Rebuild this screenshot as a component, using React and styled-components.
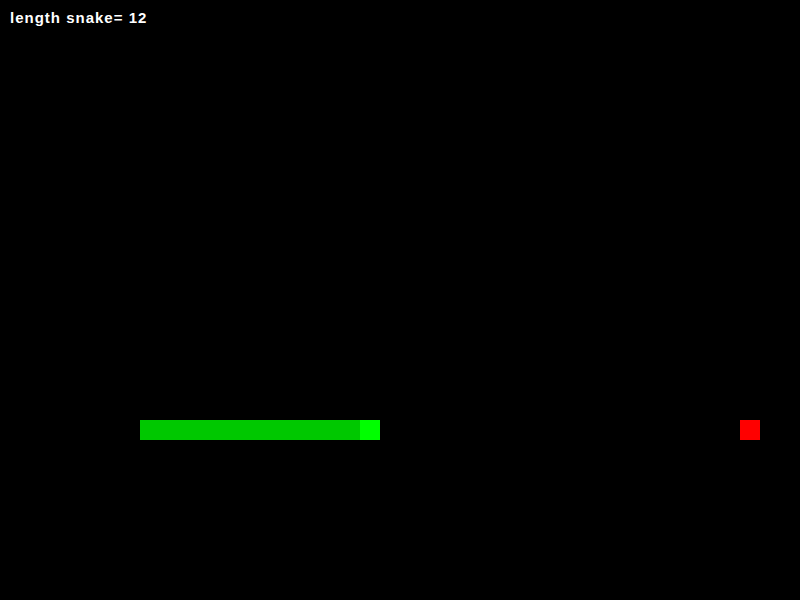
import React from 'react';
import styled, { createGlobalStyle } from 'styled-components';

const CELL = 20;
const COLS = 40;
const ROWS = 30;

const GlobalStyle = createGlobalStyle`
  html, body {
    margin: 0;
    padding: 0;
    background: #000;
    overflow: hidden;
  }
`;

// 게임 보드
const Board = styled.div`
  position: relative;
  width: ${COLS * CELL}px;
  height: ${ROWS * CELL}px;
  background: #000;
  display: grid;
  grid-template-columns: repeat(${COLS}, ${CELL}px);
  grid-template-rows: repeat(${ROWS}, ${CELL}px);
`;

const Score = styled.div`
  position: absolute;
  left: 10px;
  top: 9px;
  color: #fff;
  font-family: "Liberation Sans", Arial, sans-serif;
  font-weight: bold;
  font-size: 15px;
  letter-spacing: 1px;
  white-space: pre;
`;

const Cell = styled.div`
  background: ${p => (p.$kind === 'head' ? '#00ff00' : p.$kind === 'food' ? '#ff0000' : '#00c800')};
`;

const snake = Array.from({ length: 12 }, (_, i) => ({ x: 7 + i, y: 21 }));
const food = { x: 37, y: 21 };

function App() {
  return (
    <>
      <GlobalStyle />
      <Board>
        {snake.map((s, i) => (
          <Cell
            key={i}
            $kind={i === snake.length - 1 ? 'head' : 'body'}
            style={{ gridColumn: s.x + 1, gridRow: s.y + 1 }}
          />
        ))}
        <Cell $kind="food" style={{ gridColumn: food.x + 1, gridRow: food.y + 1 }} />
        <Score>length snake= {snake.length}</Score>
      </Board>
    </>
  );
}

export default App;
